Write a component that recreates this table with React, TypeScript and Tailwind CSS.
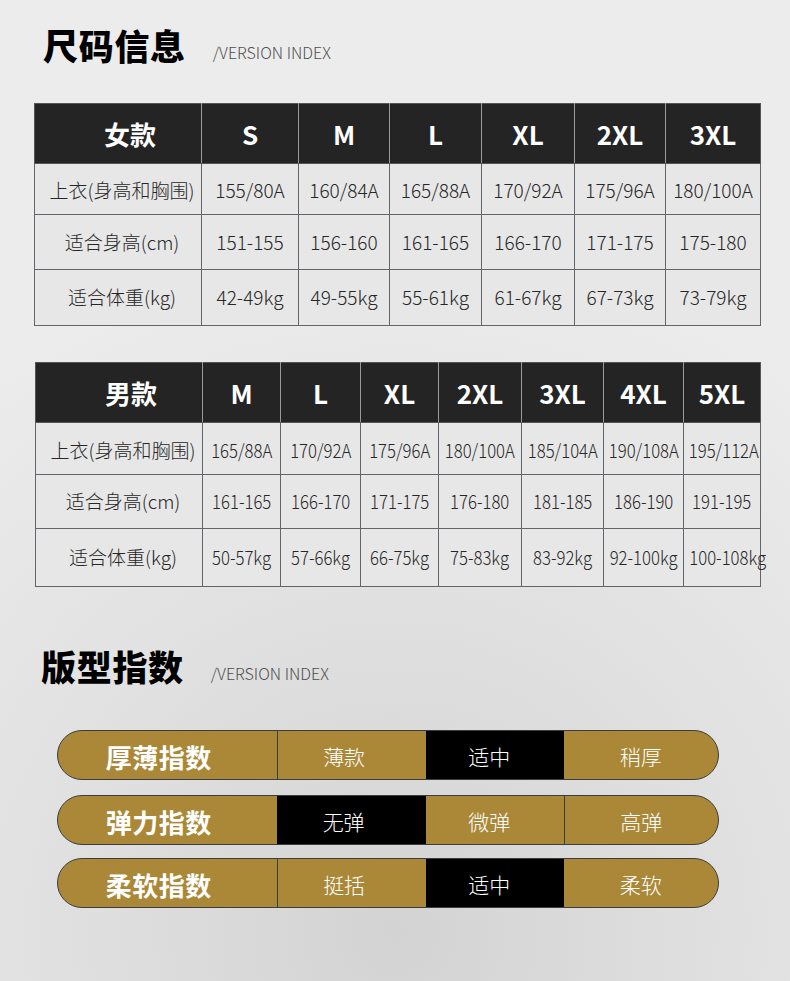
const font = "font-['Noto_Sans_CJK_SC','Noto_Sans',sans-serif]"

const rowLabels = ['上衣(身高和胸围)', '适合身高(cm)', '适合体重(kg)']

const womenTable = {
  title: '女款',
  sizes: ['S', 'M', 'L', 'XL', '2XL', '3XL'],
  cols: ['w-[167px]', 'w-[97px]', 'w-[91px]', 'w-[92px]', 'w-[93px]', 'w-[91px]', 'w-[95px]'],
  rowHeights: ['h-[51px] pt-[3px]', 'h-[55px]', 'h-[56px]'],
  rows: [
    ['155/80A', '160/84A', '165/88A', '170/92A', '175/96A', '180/100A'],
    ['151-155', '156-160', '161-165', '166-170', '171-175', '175-180'],
    ['42-49kg', '49-55kg', '55-61kg', '61-67kg', '67-73kg', '73-79kg'],
  ],
  condensed: false,
}

const menTable = {
  title: '男款',
  sizes: ['M', 'L', 'XL', '2XL', '3XL', '4XL', '5XL'],
  cols: ['w-[167px]', 'w-[78px]', 'w-[80px]', 'w-[78px]', 'w-[83px]', 'w-[82px]', 'w-[80px]', 'w-[77px]'],
  rowHeights: ['h-[52px] pt-[3px]', 'h-[54px]', 'h-[58px]'],
  rows: [
    ['165/88A', '170/92A', '175/96A', '180/100A', '185/104A', '190/108A', '195/112A'],
    ['161-165', '166-170', '171-175', '176-180', '181-185', '186-190', '191-195'],
    ['50-57kg', '57-66kg', '66-75kg', '75-83kg', '83-92kg', '92-100kg', '100-108kg'],
  ],
  condensed: true,
}

type SizeTable = typeof womenTable

function SectionTitle({ title, className }: { title: string; className: string }) {
  return (
    <div className={`flex items-end ${className}`}>
      <h2 className="text-[35px] leading-none font-black text-black tracking-[0.02em]">{title}</h2>
      <span className="ml-[27px] mb-[2px] text-[16px] leading-none font-light text-[#4f4f4f]">
        /VERSION INDEX
      </span>
    </div>
  )
}

function SizeChart({ data, className }: { data: SizeTable; className: string }) {
  return (
    <table className={`table-fixed border-collapse ${className}`}>
      <colgroup>
        {data.cols.map((c, i) => (
          <col key={i} className={c} />
        ))}
      </colgroup>
      <thead>
        <tr className="h-[60px] bg-[#242424] text-white">
          <th className="border border-[#555] border-r-[#9a9a9a] pl-[24px] text-[26px] font-bold">
            {data.title}
          </th>
          {data.sizes.map((s, i) => (
            <th
              key={s}
              className={`border border-[#555] text-[26px] font-bold ${
                i < data.sizes.length - 1 ? 'border-r-[#9a9a9a]' : ''
              }`}
            >
              {s}
            </th>
          ))}
        </tr>
      </thead>
      <tbody>
        {data.rows.map((row, r) => {
          const [h, pad = ''] = data.rowHeights[r].split(' ')
          return (
            <tr key={r} className={`${h} bg-[#e7e7e7] text-[#262626]`}>
              <td className={`border border-[#62666b] pl-[8px] text-center text-[19px] font-light whitespace-nowrap ${pad}`}>
                {rowLabels[r]}
              </td>
              {row.map((v, i) => (
                <td
                  key={i}
                  className={`border border-[#62666b] text-center text-[19px] font-light whitespace-nowrap ${pad}`}
                >
                  {data.condensed ? (
                    <span className="inline-block scale-x-[0.88]">{v}</span>
                  ) : (
                    v
                  )}
                </td>
              ))}
            </tr>
          )
        })}
      </tbody>
    </table>
  )
}

const indexRows = [
  { label: '厚薄指数', options: ['薄款', '适中', '稍厚'], active: 1, gap: '' },
  { label: '弹力指数', options: ['无弹', '微弹', '高弹'], active: 0, gap: 'mt-[15px]' },
  { label: '柔软指数', options: ['挺括', '适中', '柔软'], active: 1, gap: 'mt-[13px]' },
]

const segWidths = ['w-[149px] pr-[16px]', 'w-[138px] pr-[11px]', 'w-[155px]']

function IndexBar({
  label,
  options,
  active,
  gap,
}: {
  label: string
  options: string[]
  active: number
  gap: string
}) {
  return (
    <div
      className={`flex h-[50px] w-[662px] overflow-hidden rounded-full border border-[#3a3d42] bg-[#ab8838] text-white ${gap}`}
    >
      <div className="flex w-[220px] items-center justify-center pt-[3px] pr-[18px] text-[26px] font-bold tracking-[0.02em]">
        {label}
      </div>
      {options.map((o, i) => {
        const isActive = i === active
        const prevActive = i - 1 === active
        return (
          <div
            key={o}
            className={`flex items-center justify-center pt-[4px] text-[21px] font-light ${segWidths[i]} ${
              isActive ? 'bg-black' : prevActive ? '' : 'border-l border-[#3a3d42]'
            }`}
          >
            {o}
          </div>
        )
      })}
    </div>
  )
}

export default function App() {
  return (
    <div
      className={`${font} h-[981px] w-[790px] overflow-hidden bg-[radial-gradient(ellipse_90%_70%_at_50%_95%,#d3d3d3,#e2e2e2_55%,#ececec)]`}
    >
      <SectionTitle title="尺码信息" className="ml-[43px] pt-[27px]" />
      <SizeChart data={womenTable} className="ml-[34px] mt-[41px] w-[726px]" />
      <SizeChart data={menTable} className="ml-[35px] mt-[36px] w-[725px]" />
      <SectionTitle title="版型指数" className="ml-[41px] mt-[61px]" />
      <div className="ml-[57px] mt-[47px] flex flex-col">
        {indexRows.map((r) => (
          <IndexBar key={r.label} {...r} />
        ))}
      </div>
    </div>
  )
}
